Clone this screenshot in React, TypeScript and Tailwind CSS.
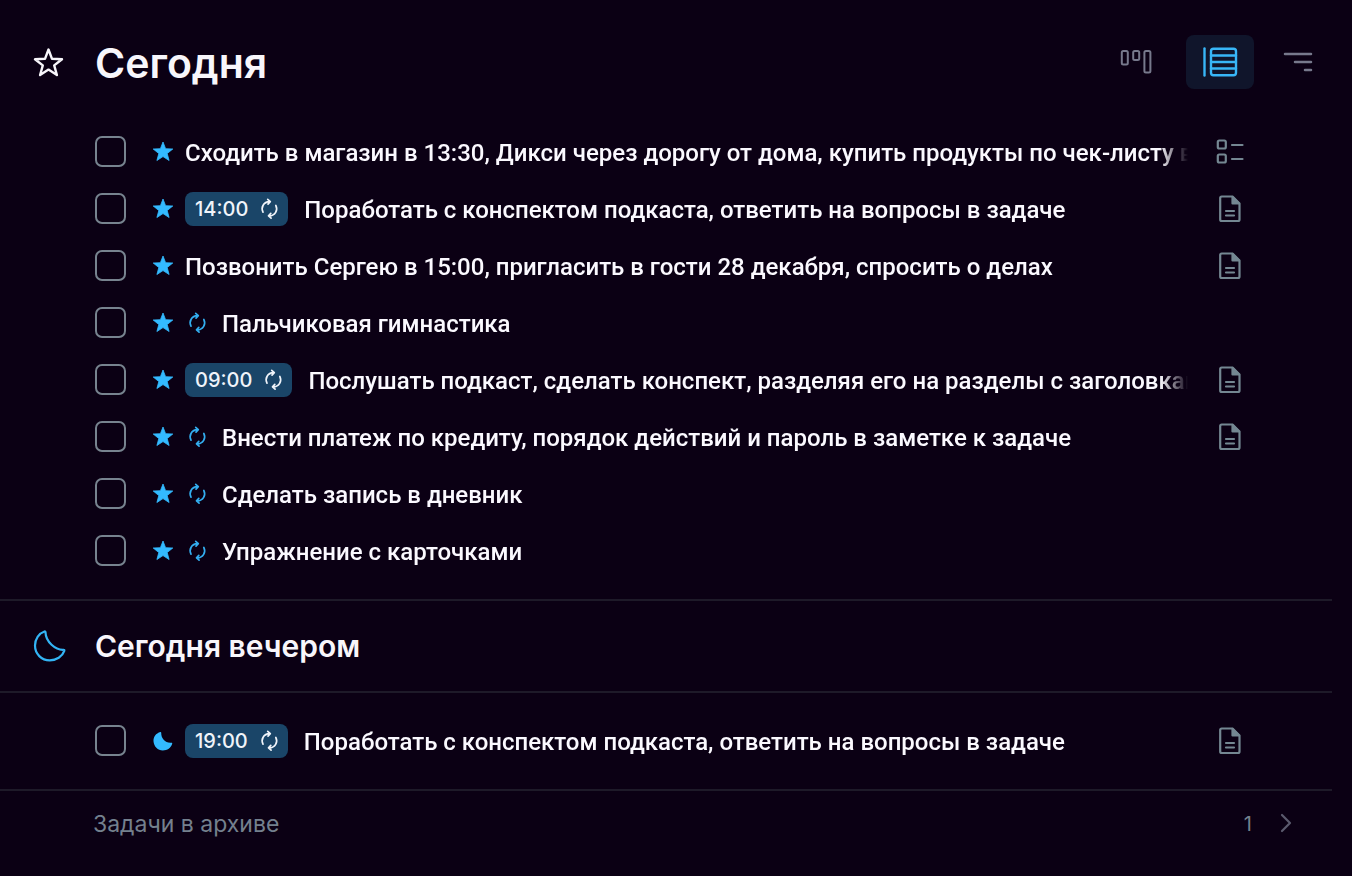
import { useState, type ReactNode } from 'react';

type Mark = 'star' | 'moon';
type Attachment = 'checklist' | 'note';

interface Task {
  id: string;
  title: string;
  time?: string;
  repeat?: boolean;
  attachment?: Attachment;
}

const todayTasks: Task[] = [
  {
    id: 'shop',
    title: 'Сходить в магазин в 13:30, Дикси через дорогу от дома, купить продукты по чек-листу внутри',
    attachment: 'checklist',
  },
  {
    id: 'podcast-notes',
    title: 'Поработать с конспектом подкаста, ответить на вопросы в задаче',
    time: '14:00',
    repeat: true,
    attachment: 'note',
  },
  {
    id: 'call',
    title: 'Позвонить Сергею в 15:00, пригласить в гости 28 декабря, спросить о делах',
    attachment: 'note',
  },
  { id: 'fingers', title: 'Пальчиковая гимнастика', repeat: true },
  {
    id: 'podcast',
    title: 'Послушать подкаст, сделать конспект, разделяя его на разделы с заголовками',
    time: '09:00',
    repeat: true,
    attachment: 'note',
  },
  {
    id: 'credit',
    title: 'Внести платеж по кредиту, порядок действий и пароль в заметке к задаче',
    repeat: true,
    attachment: 'note',
  },
  { id: 'diary', title: 'Сделать запись в дневник', repeat: true },
  { id: 'cards', title: 'Упражнение с карточками', repeat: true },
];

const eveningTasks: Task[] = [
  {
    id: 'evening-notes',
    title: 'Поработать с конспектом подкаста, ответить на вопросы в задаче',
    time: '19:00',
    repeat: true,
    attachment: 'note',
  },
];

function StarIcon() {
  return (
    <svg viewBox="0 0 24 24" className="size-6 shrink-0 text-[#33baff]" fill="currentColor" stroke="currentColor" strokeWidth="0.8" strokeLinejoin="round" aria-hidden="true">
      <path d="M12 2l2.600 6.700 7.200.3-5.600 4.500 1.900 7L12 16.600l-6.100 3.900 1.900-7L2.200 9l7.200-.3z" />
    </svg>
  );
}

function StarOutlineIcon() {
  return (
    <svg viewBox="0 0 32 32" className="size-8" fill="none" stroke="currentColor" strokeWidth="2.400" strokeLinejoin="round" aria-hidden="true">
      <path d="M16.500 3.500l3.500 9.300 10 .4-7.800 6.200 2.700 9.600-8.400-5.400-8.400 5.400 2.700-9.600L3 13.200l10-.4z" />
    </svg>
  );
}

function MoonIcon() {
  return (
    <svg viewBox="0 0 24 24" className="size-6 shrink-0 text-[#33baff]" fill="currentColor" aria-hidden="true">
      <path d="M9.400 3C4.800 4.300 2.300 8 2.500 12.200c.3 5.100 4.300 9.200 9.300 9.200 4.500 0 8.200-2.600 9.400-6.700.2-.7-.2-1.100-.9-1-6 .5-10.200-4-10.100-9.900 0-.6-.2-.9-.8-.8z" />
    </svg>
  );
}

function MoonOutlineIcon() {
  return (
    <svg viewBox="0 0 34 34" className="size-[34px] text-[#33b4f5]" fill="none" stroke="currentColor" strokeWidth="2.200" strokeLinejoin="round" aria-hidden="true">
      <path d="M12.500 2.500C6.800 4.400 3 10 3 16.600 3 25 9.500 31.300 17.700 31.300c6.700 0 12.600-3.700 14.600-9.500.2-.7-.1-1.100-.9-1C23.500 21.100 13.700 13 13.500 3.300c0-.7-.4-1-1-.8z" />
    </svg>
  );
}

function RepeatIcon() {
  return (
    <svg viewBox="0 0 20 22" className="h-[22px] w-5 shrink-0" fill="none" stroke="currentColor" strokeWidth="1.700" strokeLinecap="round" strokeLinejoin="round" aria-hidden="true">
      <path d="M3 14.200C.6 9.400 3.600 4 9.500 3.700M7.700 1.400l2.600 2.300-2.300 2.500" />
      <path d="M15.800 7.400C18.200 12.200 15.200 17.600 9.300 17.900M11.100 20.200l-2.600-2.300 2.300-2.500" />
    </svg>
  );
}

function ChecklistIcon() {
  return (
    <svg viewBox="0 0 28 26" className="h-[26px] w-7" fill="none" stroke="currentColor" strokeWidth="2.200" strokeLinecap="round" aria-hidden="true">
      <rect x="1.800" y="1.500" width="8" height="8" rx="1.500" />
      <rect x="1.800" y="15.500" width="8" height="8" rx="1.500" />
      <path d="M16 6h10.500M16 20h10.500" />
    </svg>
  );
}

function NoteIcon() {
  return (
    <svg viewBox="0 0 28 28" className="size-7" fill="none" stroke="currentColor" strokeWidth="2.200" strokeLinecap="round" strokeLinejoin="round" aria-hidden="true">
      <path d="M5.700 1.500H16.500l7 7V24.500a1.500 1.500 0 0 1-1.500 1.500H5.700A1.500 1.500 0 0 1 4.200 24.500V3A1.500 1.500 0 0 1 5.700 1.500z" />
      <path d="M16.500 2v6.500h6.500z" fill="currentColor" />
      <path d="M10 16h8M10 20.500h8" />
    </svg>
  );
}

function BoardIcon() {
  return (
    <svg viewBox="0 0 32 28" className="h-7 w-8" fill="none" stroke="currentColor" strokeWidth="2" aria-hidden="true">
      <rect x="1.800" y="3" width="6" height="13.600" rx="1.500" />
      <rect x="13.200" y="3" width="6" height="9" rx="1.500" />
      <rect x="24.400" y="3" width="6" height="21.600" rx="1.500" />
    </svg>
  );
}

function ListIcon() {
  return (
    <svg viewBox="0 0 36 32" className="h-8 w-9" fill="none" stroke="currentColor" strokeWidth="2.400" strokeLinecap="round" aria-hidden="true">
      <path d="M2.500 2.500v27" />
      <rect x="9" y="2.800" width="25" height="26.500" rx="2.500" />
      <path d="M9 9.500h25M9 16h25M9 22.500h25" />
    </svg>
  );
}

function SortIcon() {
  return (
    <svg viewBox="0 0 32 24" className="h-6 w-8" fill="none" stroke="currentColor" strokeWidth="2.500" strokeLinecap="round" aria-hidden="true">
      <path d="M3 4h26M13 12h16M23 20h6" />
    </svg>
  );
}

function ChevronIcon() {
  return (
    <svg viewBox="0 0 12 20" className="h-5 w-3 text-[#5b5a6e]" fill="none" stroke="currentColor" strokeWidth="2.200" strokeLinecap="round" strokeLinejoin="round" aria-hidden="true">
      <path d="M2 2l8 8-8 8" />
    </svg>
  );
}

function TaskRow({ task, mark }: { task: Task; mark: Mark }) {
  const [done, setDone] = useState(false);
  return (
    <li className="flex h-[57px] items-center pr-[108px] pl-[95px]">
      <input
        id={task.id}
        type="checkbox"
        checked={done}
        onChange={(event) => setDone(event.target.checked)}
        className="size-[31px] shrink-0 appearance-none rounded-[7px] border-2 border-[#77838f] checked:bg-[#33baff]"
      />
      <label htmlFor={task.id} className="ml-[25px] flex min-w-0 flex-1 items-center">
        {mark === 'star' ? <StarIcon /> : <MoonIcon />}
        {task.time ? (
          <span className="mr-4 ml-[10px] flex h-[34px] shrink-0 items-center gap-3 rounded-lg bg-[#1a4568] px-2 text-xl font-medium text-[#f0f4fa]">
            <span className="pl-[2px]">{task.time}</span>
            <RepeatIcon />
          </span>
        ) : task.repeat ? (
          <span className="mr-[14px] ml-[13px] text-[#33aef0]">
            <RepeatIcon />
          </span>
        ) : (
          <span className="w-[10px] shrink-0" />
        )}
        <span className="min-w-0 flex-1 overflow-hidden mask-[linear-gradient(to_right,black_calc(100%-28px),transparent)] pt-[2px] font-['Roboto','Inter',sans-serif] text-2xl leading-8 font-medium whitespace-nowrap text-[#fbf9ff]">
          {task.title}
        </span>
      </label>
      <span className="ml-7 flex w-7 shrink-0 justify-center text-[#748792]">
        {task.attachment === 'checklist' && <ChecklistIcon />}
        {task.attachment === 'note' && <NoteIcon />}
      </span>
    </li>
  );
}

function ViewButton({ label, active, onClick, children }: { label: string; active?: boolean; onClick?: () => void; children: ReactNode }) {
  return (
    <button
      type="button"
      aria-label={label}
      aria-pressed={active}
      onClick={onClick}
      className={`flex h-[54px] w-[68px] items-center justify-center rounded-lg ${active ? 'bg-[#10152b] text-[#38b6f7]' : 'text-[#77798c]'}`}
    >
      {children}
    </button>
  );
}

export default function App() {
  const [view, setView] = useState<'board' | 'list'>('list');
  return (
    <main className="min-h-screen bg-[#0b0014] font-['Inter','Noto_Sans',sans-serif] text-[#f8f6fb]">
      <header className="flex items-center pt-[35px] pr-5 pb-[34px] pl-8">
        <button type="button" aria-label="В избранное">
          <StarOutlineIcon />
        </button>
        <h1 className="ml-[31px] flex-1 pt-[2px] text-[41px] leading-[52px] font-semibold">Сегодня</h1>
        <div className="flex items-center">
          <span className="mr-4 flex">
            <ViewButton label="Доска" active={view === 'board'} onClick={() => setView('board')}>
              <BoardIcon />
            </ViewButton>
          </span>
          <ViewButton label="Список" active={view === 'list'} onClick={() => setView('list')}>
            <ListIcon />
          </ViewButton>
          <span className="ml-[10px] flex">
            <ViewButton label="Сортировка">
              <SortIcon />
            </ViewButton>
          </span>
        </div>
      </header>
      <ul className="pb-5">
        {todayTasks.map((task) => (
          <TaskRow key={task.id} task={task} mark="star" />
        ))}
      </ul>
      <section>
        <div className="mr-5 flex h-[94px] items-center border-y-2 border-[#1e1a29] pl-8">
          <MoonOutlineIcon />
          <h2 className="ml-[29px] text-3xl font-semibold">Сегодня вечером</h2>
        </div>
        <ul className="pt-[19px] pb-5">
          {eveningTasks.map((task) => (
            <TaskRow key={task.id} task={task} mark="moon" />
          ))}
        </ul>
      </section>
      <footer className="mr-5 border-t-2 border-[#1e1a29]">
        <a href="#archive" className="flex h-16 items-center pr-10 pl-[93px] text-[23px] text-[#74808e]">
          <span className="flex-1 pt-[2px]">Задачи в архиве</span>
          <span className="mr-7 pt-[2px] text-xl">1</span>
          <ChevronIcon />
        </a>
      </footer>
    </main>
  );
}
